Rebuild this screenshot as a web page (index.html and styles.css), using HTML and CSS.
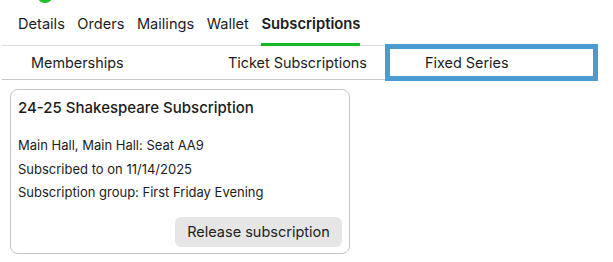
FILE: index.html
```html
<!DOCTYPE html>
<html lang="en">
<head>
    <meta charset="UTF-8">
    <meta name="viewport" content="width=device-width, initial-scale=1.0">
    <title>Subscriptions</title>
    <link rel="stylesheet" href="styles.css">
</head>
<body>
    <div class="top-strip">
        <div class="status-dot"></div>
    </div>

    <nav class="main-tabs">
        <a class="main-tab">Details</a>
        <a class="main-tab">Orders</a>
        <a class="main-tab">Mailings</a>
        <a class="main-tab">Wallet</a>
        <a class="main-tab active">Subscriptions</a>
    </nav>

    <div class="sub-tabs">
        <div class="sub-tab first">Memberships</div>
        <div class="sub-tab second">Ticket Subscriptions</div>
        <div class="sub-tab focused">Fixed Series</div>
    </div>

    <div class="card">
        <h3 class="card-title">24-25 Shakespeare Subscription</h3>
        <p class="card-line">Main Hall, Main Hall: Seat AA9</p>
        <p class="card-line">Subscribed to on 11/14/2025</p>
        <p class="card-line">Subscription group: First Friday Evening</p>
        <div class="card-actions">
            <button class="release">Release subscription</button>
        </div>
    </div>
</body>
</html>
```

FILE: styles.css
```css
* {
    margin: 0;
    padding: 0;
    box-sizing: border-box;
}

body {
    font-family: 'Inter', 'Liberation Sans', sans-serif;
    color: #1c1c1c;
    background: #fff;
    width: 613px;
    height: 262px;
    overflow: hidden;
}

.top-strip {
    height: 3px;
    overflow: hidden;
    padding-left: 37px;
}

.status-dot {
    width: 16px;
    height: 16px;
    border-radius: 50%;
    background: #1fbf2a;
    margin-top: -13px;
}

.main-tabs {
    display: flex;
    gap: 12.5px;
    margin-left: 2px;
    width: 596px;
    height: 43px;
    padding-left: 16px;
    border-bottom: 1px solid #dcdcdc;
}

.main-tab {
    font-size: 14.6px;
    line-height: 36px;
    padding-top: 3px;
    color: #1c1c1c;
    cursor: pointer;
}

.main-tab.active {
    font-weight: 600;
    font-size: 14.8px;
    border-bottom: 3px solid #12b823;
    margin-bottom: -1px;
}

.sub-tabs {
    display: flex;
    margin-left: 2px;
    width: 596px;
    height: 34px;
    border-bottom: 1px solid #c9c9c9;
}

.sub-tab {
    font-size: 14.4px;
    line-height: 33px;
    padding-left: 29px;
    color: #1c1c1c;
}

.sub-tab.first {
    width: 197px;
}

.sub-tab.second {
    width: 191px;
}

.sub-tab.focused {
    width: 203px;
    height: 27px;
    margin-top: 3px;
    line-height: 27px;
    padding-left: 35px;
    outline: 5px solid #4a9bd0;
}

.card {
    margin: 9px 0 0 10px;
    width: 340px;
    height: 165px;
    border: 1px solid #c4c4c4;
    border-radius: 8px;
    padding: 8px 7px 0 7px;
}

.card-title {
    font-size: 15px;
    font-weight: 500;
    line-height: 20px;
    margin-bottom: 16px;
}

.card-line {
    font-size: 13px;
    line-height: 23.5px;
}

.card-actions {
    display: flex;
    justify-content: flex-end;
    margin-top: 12px;
}

.release {
    font-family: inherit;
    font-size: 14.5px;
    color: #222;
    background: #e6e6e6;
    border: none;
    border-radius: 6px;
    width: 167px;
    height: 30px;
    cursor: pointer;
}
```
